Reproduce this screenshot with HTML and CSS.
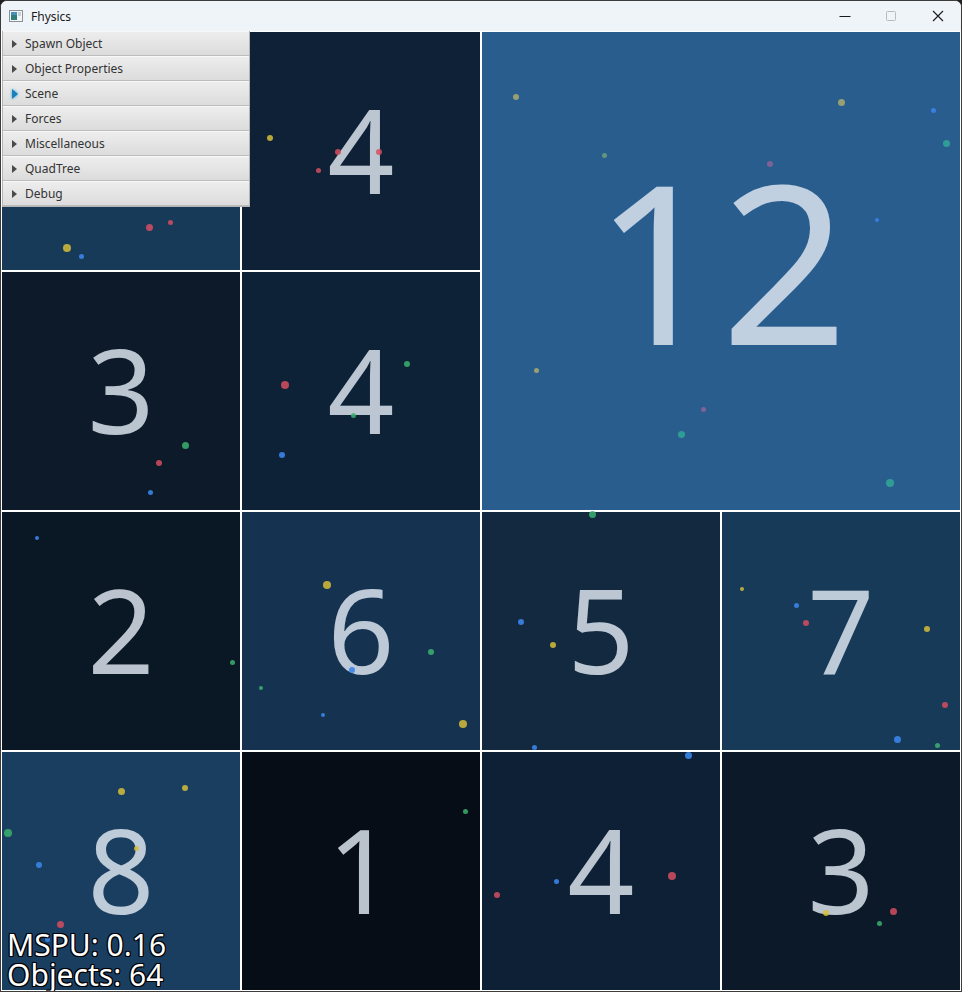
FILE: index.html
```html
<!DOCTYPE html>
<html>
<head>
<meta charset="utf-8">
<title>Fhysics</title>
<link rel="stylesheet" href="styles.css">
</head>
<body>
<div class="window">
  <div class="titlebar">
    <div class="app-icon">
      <svg width="14" height="12" viewBox="0 0 14 12">
        <rect x="0.5" y="0.5" width="13" height="11" fill="#f4f6f8" stroke="#8a9096"/>
        <rect x="2" y="2" width="6" height="8" fill="#2f7f7a"/>
        <rect x="2" y="2" width="6" height="3" fill="#4a8fb8"/>
        <rect x="9" y="2" width="3" height="4" fill="#c9d0d6"/>
      </svg>
    </div>
    <div class="title">Fhysics</div>
    <div class="controls">
      <div class="ctl">
        <svg width="12" height="12" viewBox="0 0 12 12"><line x1="0.5" y1="6.5" x2="11.5" y2="6.5" stroke="#1a1a1a" stroke-width="1"/></svg>
      </div>
      <div class="ctl">
        <svg width="12" height="12" viewBox="0 0 12 12"><rect x="1.5" y="1.5" width="9" height="9" rx="1" fill="none" stroke="#b8bcc2" stroke-width="1"/></svg>
      </div>
      <div class="ctl">
        <svg width="12" height="12" viewBox="0 0 12 12"><path d="M1 1 L11 11 M11 1 L1 11" stroke="#1a1a1a" stroke-width="1.1"/></svg>
      </div>
    </div>
  </div>
  <div class="canvas">
    <div class="grid">
      <div class="cell c-a"><span></span></div>
      <div class="cell c4a"><span>4</span></div>
      <div class="cell big c12"><span>12</span></div>
      <div class="cell c3a"><span>3</span></div>
      <div class="cell c4b"><span>4</span></div>
      <div class="cell c2"><span>2</span></div>
      <div class="cell c6"><span>6</span></div>
      <div class="cell c5"><span>5</span></div>
      <div class="cell c7"><span>7</span></div>
      <div class="cell c8"><span>8</span></div>
      <div class="cell c1"><span>1</span></div>
      <div class="cell c4c"><span>4</span></div>
      <div class="cell c3b"><span>3</span></div>
    </div>
    <div class="dots">
      <i class="d r" style="left:145px;top:193px;width:7px;height:7px"></i>
      <i class="d r" style="left:167px;top:189px;width:5px;height:5px"></i>
      <i class="d y" style="left:62px;top:213px;width:8px;height:8px"></i>
      <i class="d b" style="left:78px;top:223px;width:5px;height:5px"></i>
      <i class="d y" style="left:266px;top:104px;width:6px;height:6px"></i>
      <i class="d r" style="left:315px;top:137px;width:5px;height:5px"></i>
      <i class="d r" style="left:334px;top:118px;width:6px;height:6px"></i>
      <i class="d r" style="left:375px;top:118px;width:6px;height:6px"></i>
      <i class="d ym" style="left:512px;top:63px;width:6px;height:6px"></i>
      <i class="d gm" style="left:601px;top:122px;width:5px;height:5px"></i>
      <i class="d ym" style="left:837px;top:68px;width:7px;height:7px"></i>
      <i class="d b" style="left:930px;top:77px;width:5px;height:5px"></i>
      <i class="d t" style="left:942px;top:109px;width:7px;height:7px"></i>
      <i class="d p" style="left:766px;top:130px;width:6px;height:6px"></i>
      <i class="d b" style="left:874px;top:187px;width:4px;height:4px"></i>
      <i class="d ym" style="left:533px;top:337px;width:5px;height:5px"></i>
      <i class="d p" style="left:700px;top:376px;width:5px;height:5px"></i>
      <i class="d t" style="left:677px;top:400px;width:7px;height:7px"></i>
      <i class="d t" style="left:885px;top:448px;width:8px;height:8px"></i>
      <i class="d g" style="left:181px;top:411px;width:7px;height:7px"></i>
      <i class="d r" style="left:155px;top:429px;width:6px;height:6px"></i>
      <i class="d b" style="left:147px;top:459px;width:5px;height:5px"></i>
      <i class="d r" style="left:280px;top:350px;width:8px;height:8px"></i>
      <i class="d g" style="left:403px;top:330px;width:6px;height:6px"></i>
      <i class="d g" style="left:350px;top:382px;width:5px;height:5px"></i>
      <i class="d b" style="left:278px;top:421px;width:6px;height:6px"></i>
      <i class="d b" style="left:34px;top:505px;width:4px;height:4px"></i>
      <i class="d g" style="left:229px;top:629px;width:5px;height:5px"></i>
      <i class="d y" style="left:322px;top:550px;width:8px;height:8px"></i>
      <i class="d b" style="left:348px;top:636px;width:6px;height:6px"></i>
      <i class="d g" style="left:427px;top:618px;width:6px;height:6px"></i>
      <i class="d g" style="left:258px;top:655px;width:4px;height:4px"></i>
      <i class="d b" style="left:320px;top:682px;width:4px;height:4px"></i>
      <i class="d y" style="left:458px;top:689px;width:8px;height:8px"></i>
      <i class="d g" style="left:588px;top:480px;width:7px;height:7px"></i>
      <i class="d b" style="left:517px;top:588px;width:6px;height:6px"></i>
      <i class="d y" style="left:549px;top:611px;width:6px;height:6px"></i>
      <i class="d b" style="left:531px;top:714px;width:5px;height:5px"></i>
      <i class="d y" style="left:739px;top:556px;width:4px;height:4px"></i>
      <i class="d b" style="left:793px;top:572px;width:5px;height:5px"></i>
      <i class="d r" style="left:802px;top:589px;width:6px;height:6px"></i>
      <i class="d y" style="left:923px;top:595px;width:6px;height:6px"></i>
      <i class="d r" style="left:941px;top:671px;width:6px;height:6px"></i>
      <i class="d b" style="left:893px;top:705px;width:7px;height:7px"></i>
      <i class="d g" style="left:934px;top:712px;width:5px;height:5px"></i>
      <i class="d y" style="left:117px;top:757px;width:7px;height:7px"></i>
      <i class="d y" style="left:181px;top:754px;width:6px;height:6px"></i>
      <i class="d g" style="left:3px;top:798px;width:8px;height:8px"></i>
      <i class="d y" style="left:133px;top:815px;width:5px;height:5px"></i>
      <i class="d b" style="left:35px;top:831px;width:6px;height:6px"></i>
      <i class="d r" style="left:56px;top:890px;width:7px;height:7px"></i>
      <i class="d b" style="left:44px;top:906px;width:5px;height:5px"></i>
      <i class="d g" style="left:462px;top:778px;width:5px;height:5px"></i>
      <i class="d b" style="left:684px;top:721px;width:7px;height:7px"></i>
      <i class="d r" style="left:493px;top:861px;width:6px;height:6px"></i>
      <i class="d b" style="left:553px;top:848px;width:5px;height:5px"></i>
      <i class="d r" style="left:667px;top:841px;width:8px;height:8px"></i>
      <i class="d y" style="left:822px;top:879px;width:6px;height:6px"></i>
      <i class="d r" style="left:889px;top:877px;width:7px;height:7px"></i>
      <i class="d g" style="left:876px;top:890px;width:5px;height:5px"></i>
    </div>
    <div class="menu">
      <div class="item"><span class="arrow"></span>Spawn Object</div>
      <div class="item"><span class="arrow"></span>Object Properties</div>
      <div class="item"><span class="arrow focus"></span>Scene</div>
      <div class="item"><span class="arrow"></span>Forces</div>
      <div class="item"><span class="arrow"></span>Miscellaneous</div>
      <div class="item"><span class="arrow"></span>QuadTree</div>
      <div class="item"><span class="arrow"></span>Debug</div>
    </div>
    <div class="stats">
      <div>MSPU: 0.16</div>
      <div>Objects: 64</div>
    </div>
  </div>
</div>
</body>
</html>
```
FILE: styles.css
```css
* { box-sizing: border-box; }
html, body { margin: 0; padding: 0; background: #202020; }
body { width: 962px; height: 992px; overflow: hidden; }

.window {
  width: 962px;
  height: 992px;
  border: 1px solid #3c3c3c;
  border-radius: 7px 7px 0 0;
  background: #eff4f9;
  overflow: hidden;
  display: flex;
  flex-direction: column;
}

.titlebar {
  height: 30px;
  flex: none;
  display: flex;
  align-items: center;
  background: #eff4f9;
  font-family: "Noto Sans", "Open Sans", sans-serif;
}
.app-icon { width: 14px; height: 12px; margin-left: 8px; display: flex; }
.title { margin-left: 8px; font-size: 12px; color: #1a1a1a; }
.controls { margin-left: auto; display: flex; height: 100%; }
.ctl { width: 46px; height: 100%; display: flex; align-items: center; justify-content: center; }
.ctl:last-child { width: 47px; }

.canvas {
  position: relative;
  width: 960px;
  height: 960px;
  background: #0a1826;
}

.grid {
  display: grid;
  grid-template-columns: repeat(4, 240px);
  grid-template-rows: repeat(4, 240px);
}
.cell {
  border: 1px solid #ffffff;
  display: flex;
  align-items: center;
  justify-content: center;
  font-family: "Noto Sans", "Open Sans", sans-serif;
  color: rgba(222, 230, 240, 0.84);
  font-size: 117px;
  line-height: 1;
}
.cell span { display: block; transform: translateY(-3px); }
.cell.big { grid-column: 3 / 5; grid-row: 1 / 3; font-size: 222px; }
.cell.big span { transform: translateY(-12px); }

.c-a { background: #173a59; }
.c4a { background: #0e2136; }
.c12 { background: #285d8e; }
.c3a { background: #0c1a2a; }
.c4b { background: #0e2237; }
.c2 { background: #0a1724; }
.c6 { background: #153350; }
.c5 { background: #12293f; }
.c7 { background: #173a58; }
.c8 { background: #1a3e60; }
.c1 { background: #060d16; }
.c4c { background: #0e2036; }
.c3b { background: #0b1929; }

.dots { position: absolute; inset: 0; pointer-events: none; }
.d { position: absolute; border-radius: 50%; display: block; }
.d.r { background: rgba(214, 78, 96, 0.85); }
.d.y { background: rgba(214, 190, 56, 0.85); }
.d.ym { background: rgba(170, 170, 110, 0.85); }
.d.g { background: rgba(60, 178, 110, 0.85); }
.d.gm { background: rgba(110, 160, 120, 0.85); }
.d.b { background: rgba(58, 132, 232, 0.9); }
.d.t { background: rgba(48, 168, 150, 0.85); }
.d.p { background: rgba(140, 100, 150, 0.85); }

.menu {
  position: absolute;
  left: 1px;
  top: 0px;
  width: 248px;
  display: flex;
  flex-direction: column;
  border: 1px solid #b4b4b4;
  border-top: none;
  font-family: "Noto Sans", "Open Sans", sans-serif;
  font-size: 12px;
  color: #333333;
}
.item {
  height: 25px;
  display: flex;
  align-items: center;
  background: linear-gradient(#ededed, #dcdcdc);
  border-top: 1px solid #f8f8f8;
  border-bottom: 1px solid #bcbcbc;
}
.arrow {
  width: 0;
  height: 0;
  margin-left: 9px;
  margin-right: 8px;
  border-left: 5px solid #4a4a4a;
  border-top: 4px solid transparent;
  border-bottom: 4px solid transparent;
}
.arrow.focus {
  border-left: 6px solid #1e7fb8;
  border-top-width: 5px;
  border-bottom-width: 5px;
  margin-right: 7px;
  filter: drop-shadow(0 0 1.5px #27a7e8);
}

.stats {
  position: absolute;
  left: 6px;
  bottom: 1px;
  font-family: "Noto Sans", "Open Sans", sans-serif;
  font-size: 30px;
  line-height: 30px;
  color: #ffffff;
  text-shadow: 1px 0 0 #000, -1px 0 0 #000, 0 1px 0 #000, 0 -1px 0 #000, 1px 1px 0 #000, -1px -1px 0 #000, 1px -1px 0 #000, -1px 1px 0 #000;
}
```
